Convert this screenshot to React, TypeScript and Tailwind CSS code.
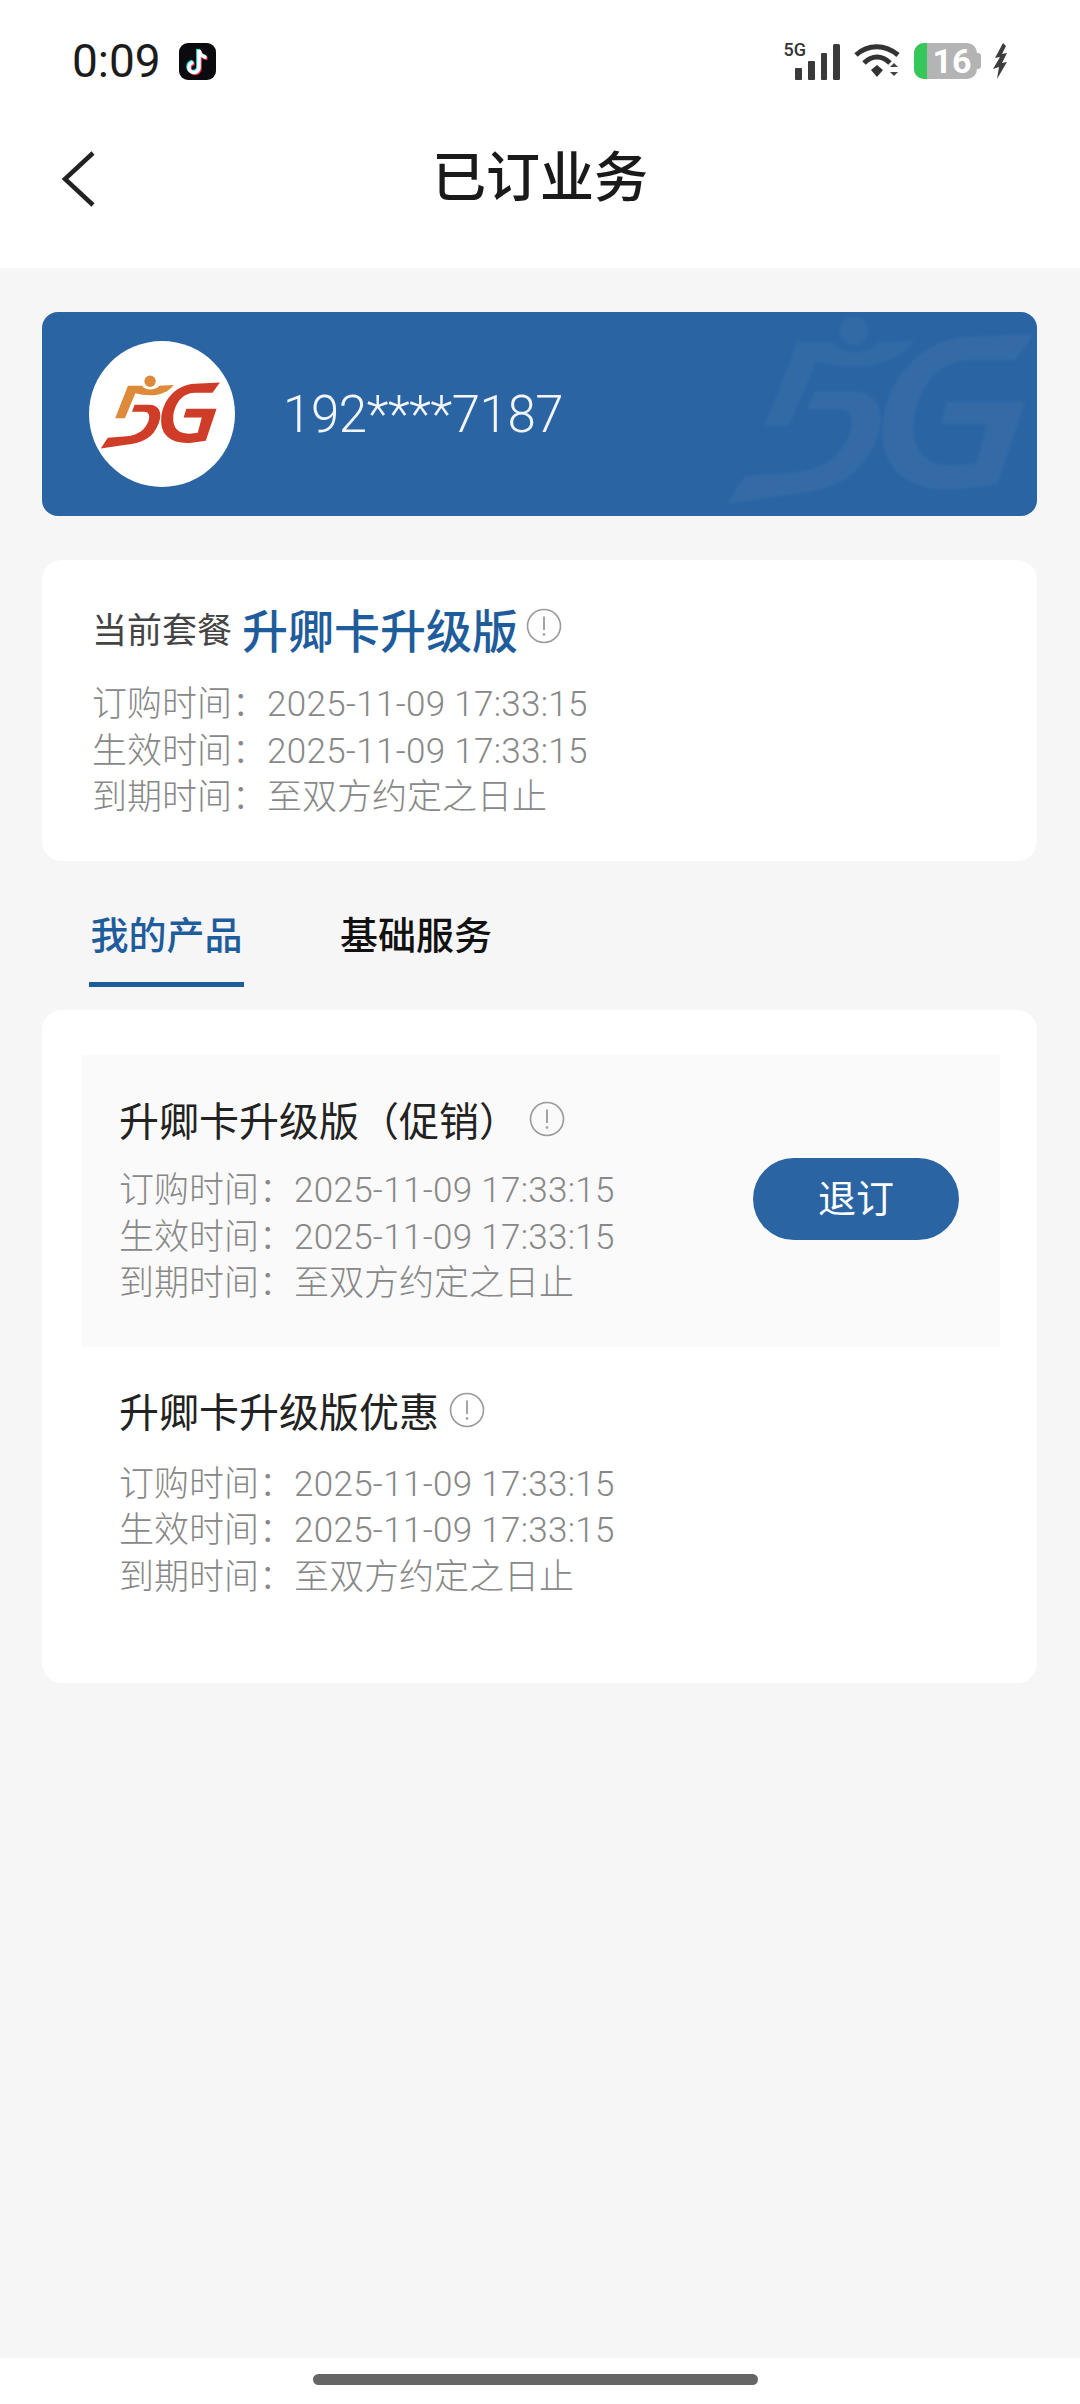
import React from 'react';

type Product = {
  name: string;
  canCancel?: boolean;
};

const products: Product[] = [
  { name: '升卿卡升级版（促销）', canCancel: true },
  { name: '升卿卡升级版优惠' },
];

function InfoIcon({ className }: { className?: string }) {
  return (
    <svg viewBox="0 0 36 36" className={className} fill="none">
      <circle cx="18" cy="18" r="16.5" stroke="#9a9a9a" strokeWidth="1.6" />
      <path d="M18 8.5V22" stroke="#9a9a9a" strokeWidth="1.8" />
      <circle cx="18" cy="26.5" r="1.3" fill="#9a9a9a" />
    </svg>
  );
}

// carrier mark, also reused as the faint watermark on the banner
function FiveGMark({
  viewBox,
  className,
  accentClass,
  mainClass,
}: {
  viewBox: string;
  className?: string;
  accentClass: string;
  mainClass: string;
}) {
  return (
    <svg viewBox={viewBox} className={className}>
      <g className={accentClass}>
        <circle cx="212" cy="158" r="17" />
        <path d="M146 171H188C196 185 226 187 240 171L282 169C268 190 240 200 212 200C198 200 180 197 168 194L137 268H108Z" />
      </g>
      <g className={mainClass}>
        <path d="M166 228H208C238 228 250 250 238 282C222 326 190 342 140 347L65 358L86 326L142 322C176 318 196 304 207 277C213 259 208 249 194 249H158Z" />
        <path d="M420 162L398 192H345C308 192 284 226 281 264C279 298 296 315 330 314L354 311L366 266H312L320 240H410L378 335L336 341C280 346 243 322 245 272C247 214 290 167 345 165Z" />
      </g>
    </svg>
  );
}

function SignalIcon() {
  return (
    <div className="flex items-end">
      <span className="mb-[23px] mr-[-12px] text-[18px] leading-[15px] font-medium text-[#333333]">5G</span>
      <svg viewBox="0 0 48 36" className="h-[36px] w-[48px]" fill="#3a3a3a">
        <rect x="1" y="24" width="7" height="12" rx="1" />
        <rect x="14" y="17" width="7" height="19" rx="1" />
        <rect x="27" y="9" width="6" height="27" rx="1" />
        <rect x="39" y="0" width="7" height="36" rx="1.5" />
      </svg>
    </div>
  );
}

function WifiIcon() {
  return (
    <svg viewBox="0 0 48 36" className="h-[36px] w-[48px]" fill="none" stroke="#333">
      <path d="M2 12C14 1 31 1 44 12" strokeWidth="5" />
      <path d="M10 20C18 12 28 12 36 20" strokeWidth="5" />
      <path d="M17 27L23 22L29 27L23 34Z" fill="#333" strokeWidth="0" />
      <path d="M36 24L40 20L44 24ZM36 29L40 33L44 29Z" fill="#444" strokeWidth="0" />
    </svg>
  );
}

function BoltIcon() {
  return (
    <svg viewBox="0 0 15 36" className="h-[36px] w-[15px]" fill="#3d3d3d">
      <path d="M10 0L2 15L7 14L0 26L6 24L4 36L14 19L9 20L14 10L9 11L13 3Z" />
    </svg>
  );
}

function BatteryIcon() {
  return (
    <div className="flex items-center">
      <div className="flex h-[36px] w-[63px] rounded-[10px] bg-[#b4b4b4]">
        <div className="h-full w-[13px] rounded-l-[10px] bg-[#35c759]" />
        <span className="flex-1 text-center text-[34px] leading-[36px] font-bold text-white">16</span>
      </div>
      <div className="h-[16px] w-[4px] rounded-r-[3px] bg-[#b4b4b4]" />
    </div>
  );
}

function TiktokIcon() {
  const note = 'M20 7V24.5A5 5 0 1 1 14.5 19.5M20 7C20.5 11 23.5 14 27.5 14.5';
  return (
    <div className="flex h-[37px] w-[37px] items-center justify-center rounded-[9px] bg-[#0a0a0f]">
      <svg viewBox="0 0 37 37" className="h-[37px] w-[37px]" fill="none" strokeWidth="3.6">
        <path d={note} stroke="#25f4ee" transform="translate(-1 -1)" />
        <path d={note} stroke="#fe2c55" transform="translate(1 1)" />
        <path d={note} stroke="#ffffff" />
      </svg>
    </div>
  );
}

function TimeLines() {
  return (
    <div className="text-[35px] leading-[46.5px] font-light text-[#888888]">
      <p>
        订购时间：<span className="tracking-[0.3px]">2025-11-09 17:33:15</span>
      </p>
      <p>
        生效时间：<span className="tracking-[0.3px]">2025-11-09 17:33:15</span>
      </p>
      <p>到期时间：至双方约定之日止</p>
    </div>
  );
}

function ProductRow({ product, active }: { product: Product; active: boolean }) {
  return (
    <div className={active ? 'flex h-[292px] items-center justify-between bg-[#fafafa] pr-[41px] pl-[37px]' : 'flex h-[292px] items-center justify-between pr-[41px] pl-[37px]'}>
      <div>
        <div className={product.canCancel ? 'mb-[21px] flex items-center pt-[5px]' : 'mb-[24px] flex items-center pt-[5px]'}>
          <h3 className="text-[40px] leading-[48px] font-normal text-[#222222]">{product.name}</h3>
          <InfoIcon className={product.canCancel ? 'mb-[8px] ml-[10px] h-[36px] w-[36px]' : 'mb-[8px] ml-[10px] h-[36px] w-[36px]'} />
        </div>
        <TimeLines />
      </div>
      {product.canCancel && (
        <button className="mt-[-4px] h-[82px] w-[206px] rounded-full bg-[#2a64a3] text-[38px] font-normal text-white">
          退订
        </button>
      )}
    </div>
  );
}

export default function App() {
  return (
    <div className="flex h-[2404px] w-[1080px] flex-col overflow-hidden bg-[#f6f6f7] font-['Roboto','Noto_Sans_CJK_SC',sans-serif]">
      <header className="h-[268px] bg-white">
        <div className="flex h-[122px] items-center justify-between pr-[72px] pl-[72px]">
          <div className="flex items-center gap-[18px]">
            <span className="text-[46px] leading-none font-normal text-[#1c1c1c]">0:09</span>
            <TiktokIcon />
          </div>
          <div className="flex items-center gap-[12px]">
            <SignalIcon />
            <WifiIcon />
            <BatteryIcon />
            <BoltIcon />
          </div>
        </div>
        <div className="grid h-[114px] grid-cols-[1fr_auto_1fr] items-center pl-[60px]">
          <svg viewBox="0 0 36 56" className="h-[56px] w-[36px]" fill="none" stroke="#222222" strokeWidth="4.5">
            <path d="M33 2L5 28L33 54" />
          </svg>
          <h1 className="mr-[60px] text-[54px] leading-none font-medium text-[#1a1a1a]">已订业务</h1>
          <div />
        </div>
      </header>

      <main className="flex-1 pt-[44px] pr-[43px] pl-[42px]">
        <section className="relative flex h-[204px] items-center overflow-hidden rounded-[16px] bg-[#2a64a3] pl-[47px]">
          <FiveGMark
            viewBox="65 140 355 218"
            className="absolute top-[3px] left-[685px] h-[189px] w-[307px] blur-[1.5px]"
            accentClass="fill-white/[0.04]"
            mainClass="fill-white/[0.05]"
          />
          <div className="flex h-[146px] w-[146px] items-center justify-center rounded-full bg-white">
            <FiveGMark
              viewBox="30 38 435 435"
              className="h-[146px] w-[146px]"
              accentClass="fill-[#dd8a3a]"
              mainClass="fill-[#cf3d28]"
            />
          </div>
          <span className="ml-[48px] text-[51px] leading-none font-light tracking-[-0.4px] text-[#f2f6fb]">192****7187</span>
        </section>

        <section className="mt-[44px] h-[301px] rounded-[20px] bg-white pt-[44px] pl-[50px]">
          <div className="mb-[22px] flex items-center">
            <span className="text-[35px] leading-[56px] font-normal text-[#444444]">当前套餐</span>
            <span className="ml-[10px] text-[46px] leading-[56px] font-medium text-[#1f5c9c]">升卿卡升级版</span>
            <InfoIcon className="mb-[12px] ml-[8px] h-[36px] w-[36px]" />
          </div>
          <TimeLines />
        </section>

        <nav className="flex h-[149px] pt-[44px] pl-[47px]">
          <div className="h-[82px] w-[155px] border-b-[5px] border-[#1f5c9c] text-center text-[38px] leading-[62px] font-medium text-[#1f5c9c]">
            我的产品
          </div>
          <div className="ml-[96px] text-[38px] leading-[62px] font-medium text-[#111111]">基础服务</div>
        </nav>

        <section className="h-[673px] rounded-[20px] bg-white pt-[45px] pr-[37px] pl-[40px]">
          {products.map((product, i) => (
            <ProductRow key={product.name} product={product} active={i === 0} />
          ))}
        </section>
      </main>

      <footer className="flex h-[46px] items-start justify-center bg-white pt-[16px]">
        <div className="mr-[9px] h-[11px] w-[445px] rounded-full bg-[#666666]" />
      </footer>
    </div>
  );
}
